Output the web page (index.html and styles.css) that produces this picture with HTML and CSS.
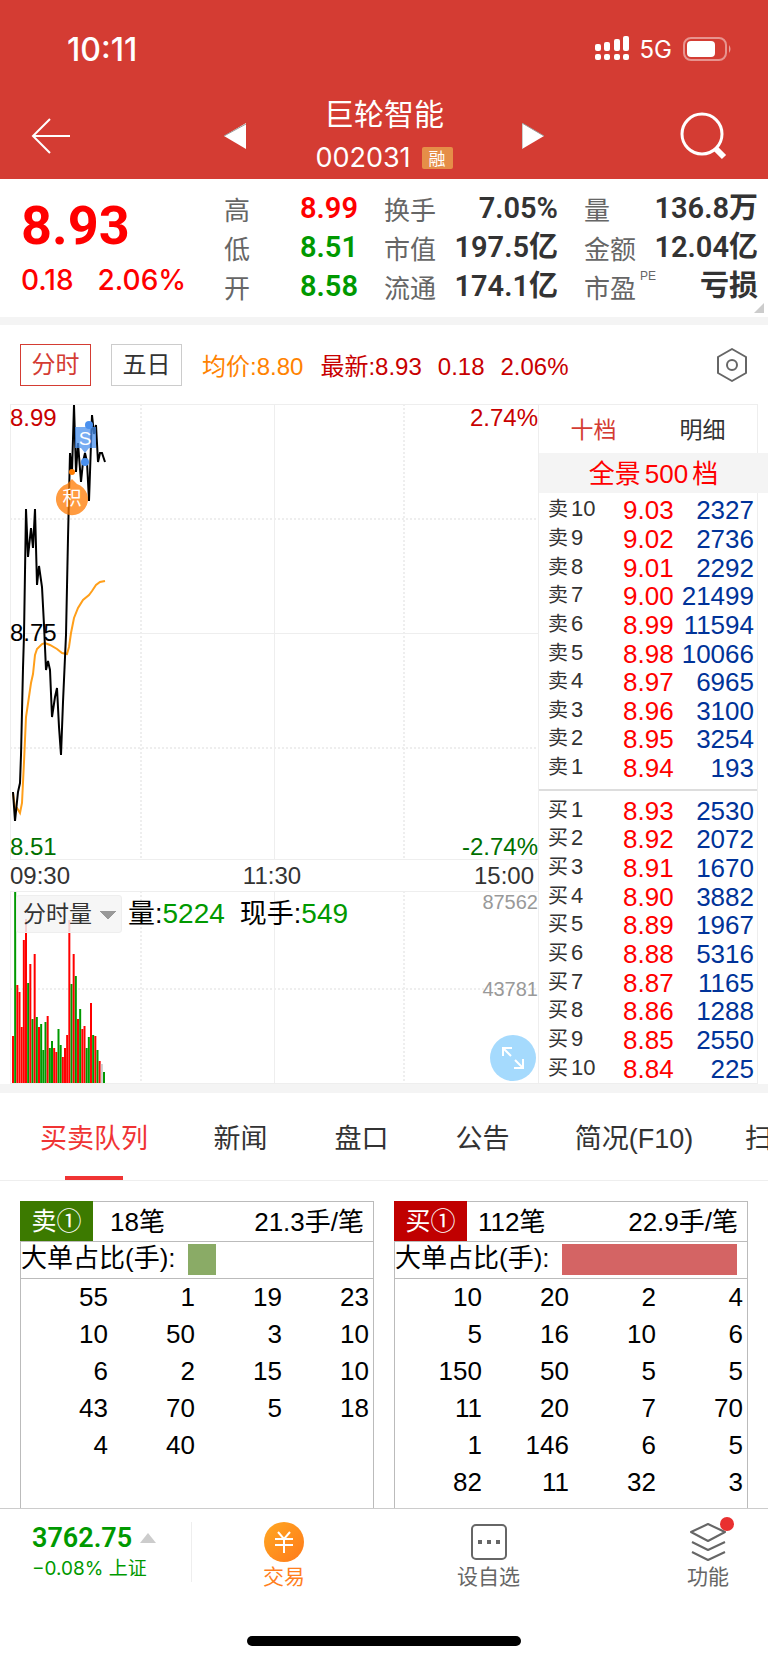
FILE: index.html
```html
<!DOCTYPE html>
<html lang="zh-CN">
<head>
  <meta charset="UTF-8" />
  <meta name="viewport" content="width=device-width, initial-scale=1.0"/>
  <title>巨轮智能 002031</title>
  <link rel="stylesheet" href="styles.css">
</head>
<body>

  <header class="header">
    <div class="status-bar">
      <span class="clock">10:11</span>
      <div class="status-icons">
        <svg width="34" height="26" viewBox="0 0 34 26" fill="#fff">
          <rect x="0" y="8" width="6" height="7" rx="2"/>
          <rect x="9" y="6" width="6" height="9" rx="2"/>
          <rect x="19" y="3" width="6" height="12" rx="2"/>
          <rect x="28" y="0" width="6" height="15" rx="2"/>
          <rect x="0" y="18" width="6" height="6" rx="2"/>
          <rect x="9" y="18" width="6" height="6" rx="2"/>
          <rect x="19" y="18" width="6" height="6" rx="2"/>
          <rect x="28" y="18" width="6" height="6" rx="2"/>
        </svg>
        <span class="network">5G</span>
        <svg width="49" height="24" viewBox="0 0 49 24">
          <rect x="1" y="1" width="42" height="22" rx="7" fill="none" stroke="#fff" stroke-opacity="0.45" stroke-width="2"/>
          <rect x="4" y="4" width="28" height="16" rx="4" fill="#fff"/>
          <path d="M46 8 Q49 12 46 16 Z" fill="#fff" fill-opacity="0.5"/>
        </svg>
      </div>
    </div>

    <nav class="stock-nav">
      <button class="back-btn" aria-label="返回">
        <svg width="40" height="38" viewBox="0 0 40 38" fill="none" stroke="#fff" stroke-width="2">
          <path d="M39 19 H2 M19 2 L2 19 L19 36"/>
        </svg>
      </button>
      <button class="arrow-btn" aria-label="上一只">
        <svg width="22" height="26" viewBox="0 0 22 26"><path d="M22 0 V26 L0 13 Z" fill="#fff"/><path d="M22 1 L0 13" stroke="#999" stroke-width="1"/></svg>
      </button>
      <div class="stock-title">
        <h1>巨轮智能</h1>
        <p>002031 <span class="tag">融</span></p>
      </div>
      <button class="arrow-btn" aria-label="下一只">
        <svg width="22" height="26" viewBox="0 0 22 26"><path d="M0 0 V26 L22 13 Z" fill="#fff"/><path d="M0 26 V0 L22 13" fill="none" stroke="#999" stroke-width="1"/></svg>
      </button>
      <button class="search-btn" aria-label="搜索">
        <svg width="48" height="48" viewBox="0 0 48 48" fill="none" stroke="#fff">
          <circle cx="22" cy="22" r="20" stroke-width="3"/>
          <path d="M36 37 L44 45" stroke-width="6"/>
        </svg>
      </button>
    </nav>
  </header>

  <section class="quote">
    <div class="price-box">
      <div class="price">8.93</div>
      <div class="change"><span>0.18</span><span>2.06%</span></div>
    </div>
    <dl class="stats stats-narrow">
      <dt>高</dt><dd class="up">8.99</dd>
      <dt>低</dt><dd class="down">8.51</dd>
      <dt>开</dt><dd class="down">8.58</dd>
    </dl>
    <dl class="stats">
      <dt>换手</dt><dd>7.05%</dd>
      <dt>市值</dt><dd>197.5亿</dd>
      <dt>流通</dt><dd>174.1亿</dd>
    </dl>
    <dl class="stats">
      <dt>量</dt><dd>136.8万</dd>
      <dt>金额</dt><dd>12.04亿</dd>
      <dt>市盈<span class="pe">PE</span></dt><dd>亏损</dd>
    </dl>
  </section>

  <section class="toolbar">
    <button class="period active">分时</button>
    <button class="period">五日</button>
    <span class="avg">均价:8.80</span>
    <span class="latest"><span>最新:8.93</span><span>0.18</span><span>2.06%</span></span>
    <button class="settings" aria-label="设置">
      <svg width="32" height="34" viewBox="0 0 32 34" fill="none" stroke="#666" stroke-width="2">
        <path d="M16 1 L30 9 V25 L16 33 L2 25 V9 Z" stroke-linejoin="round"/>
        <circle cx="16" cy="17" r="5"/>
      </svg>
    </button>
  </section>

  <section class="market">
    <div class="charts">
      <div class="chart">
        <svg viewBox="0 0 528 456">
          <g class="grid-lines">
            <path d="M0 .5 H528 M.5 0 V456 M0 229.5 H528 M264.5 0 V456 M0 455.5 H528"/>
            <path class="dotted" d="M0 115 H528 M0 344 H528 M131 0 V456 M394 0 V456"/>
          </g>
          <polyline class="line-avg" points="3,389 5,404 7,404 10,409 12,399 14,358 16,313 21,279 23,270 25,251 27,245 32,240 35,239 40,241 47,245 52,249 57,250 59,243 61,229 64,214 68,204 73,196 79,191 82,187 86,181 90,178 95,177"/>
          <polyline class="line-price" points="3,388 5,417 8,388 10,379 11,351 13,264 14,231 16,105 18,153 21,124 23,144 25,105 27,181 29,162 32,183 34,221 36,266 38,257 40,266 42,313 45,293 47,284 49,323 51,351 53,298 56,231 58,134 60,49 62,68 64,1 66,68 68,39 71,78 73,58 75,49 77,58 79,97 82,11 84,30 86,21 88,58 90,49 92,49 95,58"/>
          <g class="mark-sell">
            <circle cx="79" cy="21" r="4"/>
            <circle cx="75" cy="58" r="4"/>
            <path d="M65 23 H86 V44 H79 L75 49 L71 44 H65 Z"/>
            <text x="75" y="41">S</text>
          </g>
          <g class="mark-score">
            <circle cx="62" cy="68" r="3"/>
            <path d="M62 75 L67 80 A16 16 0 1 1 57 80 Z"/>
            <text x="62" y="101">积</text>
          </g>
        </svg>
        <span class="label top-left high">8.99</span>
        <span class="label top-right high">2.74%</span>
        <span class="label mid-left">8.75</span>
        <span class="label bottom-left low">8.51</span>
        <span class="label bottom-right low">-2.74%</span>
      </div>
      <div class="time-axis"><span>09:30</span><span>11:30</span><span>15:00</span></div>
      <div class="chart">
        <svg viewBox="0 0 528 193">
          <g class="grid-lines">
            <path d="M0 .5 H528 M.5 0 V193 M264.5 0 V193 M0 192.5 H528"/>
            <path class="dotted" d="M0 98 H528 M131 0 V193 M394 0 V193"/>
          </g>
          <g id="volumeBars"></g>
        </svg>
        <div class="volume-head">
          <select class="indicator" aria-label="指标"><option>分时量</option></select>
          <span>量:<b>5224</b></span>
          <span>现手:<b>549</b></span>
        </div>
        <span class="label scale-top">87562</span>
        <span class="label scale-mid">43781</span>
        <button class="expand-btn" aria-label="全屏">
          <svg width="46" height="46" viewBox="0 0 46 46" fill="none" stroke="#fff" stroke-width="2">
            <path d="M13 21 V13 H22 M13 13 L21 21 M33 24 V33 H24 M33 33 L25 25"/>
          </svg>
        </button>
      </div>
    </div>

    <aside class="order-book">
      <div class="book-tabs">
        <button class="active">十档</button>
        <button>明细</button>
      </div>
      <button class="full-view">全景<span>500</span>档</button>
      <table class="levels sell-levels" id="sellLevels"></table>
      <table class="levels buy-levels" id="buyLevels"></table>
    </aside>
  </section>

  <nav class="tabs">
    <button class="active">买卖队列</button>
    <button>新闻</button>
    <button>盘口</button>
    <button>公告</button>
    <button>简况(F10)</button>
    <button>扫雷</button>
  </nav>

  <section class="queues">
    <div class="queue sell">
      <div class="queue-head"><span class="side">卖①</span><span>18笔</span><span class="per">21.3手/笔</span></div>
      <div class="ratio">大单占比(手):<div class="track"><div class="bar" style="width:16%"></div></div></div>
      <table id="sellQueue"></table>
    </div>
    <div class="queue buy">
      <div class="queue-head"><span class="side">买①</span><span>112笔</span><span class="per">22.9手/笔</span></div>
      <div class="ratio">大单占比(手):<div class="track"><div class="bar" style="width:100%"></div></div></div>
      <table id="buyQueue"></table>
    </div>
  </section>

  <footer class="bottom-bar">
    <div class="index-box">
      <div class="index-value">3762.75 <i class="caret"></i></div>
      <div class="index-change">−0.08% 上证</div>
    </div>
    <a href="#" class="action trade">
      <svg width="40" height="40" viewBox="0 0 40 40">
        <defs>
          <linearGradient id="gold" x1="0" y1="0" x2="1" y2="1">
            <stop offset="0" stop-color="#ffa722"/><stop offset="1" stop-color="#ff7a1a"/>
          </linearGradient>
        </defs>
        <circle cx="20" cy="20" r="20" fill="url(#gold)"/>
        <path d="M14 10 L20 17 L26 10 M11 17 H29 M11 23 H29 M20 17 V31" fill="none" stroke="#fff" stroke-width="2"/>
      </svg>
      交易
    </a>
    <a href="#" class="action">
      <svg width="40" height="40" viewBox="0 0 40 40">
        <rect x="3" y="3" width="34" height="34" rx="4" fill="none" stroke="#666" stroke-width="2"/>
        <path d="M9 18 h4 v4 h-4 z M18 18 h4 v4 h-4 z M27 18 h4 v4 h-4 z" fill="#666"/>
      </svg>
      设自选
    </a>
    <a href="#" class="action more">
      <svg width="40" height="40" viewBox="0 0 40 40" fill="none" stroke="#666" stroke-width="2" stroke-linejoin="round">
        <path d="M20 2 L37 10 L20 19 L3 10 Z M4 20 L20 28 L37 20 M4 30 L20 38 L37 30"/>
      </svg>
      功能
      <span class="dot"></span>
    </a>
  </footer>
  <div class="home-indicator"></div>

  <script>
    const sells = [["9.03", 2327], ["9.02", 2736], ["9.01", 2292], ["9.00", 21499], ["8.99", 11594],
                   ["8.98", 10066], ["8.97", 6965], ["8.96", 3100], ["8.95", 3254], ["8.94", 193]];
    const buys = [["8.93", 2530], ["8.92", 2072], ["8.91", 1670], ["8.90", 3882], ["8.89", 1967],
                  ["8.88", 5316], ["8.87", 1165], ["8.86", 1288], ["8.85", 2550], ["8.84", 225]];

    function renderLevels(id, rows, name) {
      document.getElementById(id).innerHTML = rows.map(([price, vol], i) => {
        const level = name === "卖" ? 10 - i : i + 1;
        return `<tr><th>${name}<span>${level}</span></th><td class="lv-price">${price}</td><td class="lv-vol">${vol}</td></tr>`;
      }).join("");
    }

    function renderQueue(id, rows) {
      document.getElementById(id).innerHTML = rows.map(row =>
        `<tr>${row.map(n => `<td>${n}</td>`).join("")}</tr>`
      ).join("");
    }

    renderLevels("sellLevels", sells, "卖");
    renderLevels("buyLevels", buys, "买");
    renderQueue("sellQueue", [[55, 1, 19, 23], [10, 50, 3, 10], [6, 2, 15, 10], [43, 70, 5, 18], [4, 40, "", ""]]);
    renderQueue("buyQueue", [[10, 20, 2, 4], [5, 16, 10, 6], [150, 50, 5, 5], [11, 20, 7, 70], [1, 146, 6, 5], [82, 11, 32, 3]]);

    // one bar per minute, r = up, g = down, n = flat
    const heights = [47, 191, 98, 91, 56, 143, 164, 100, 119, 64, 129, 66, 56, 59, 33, 61, 67, 35, 42, 35, 31, 54,
                     38, 26, 35, 48, 163, 99, 129, 107, 64, 74, 54, 57, 35, 46, 80, 48, 47, 33, 22, 19, 11];
    const dirs = "rgrrrrrgrgrgrgggrggrrggrrrrgrgrgrrggrgrgrng";
    const colors = { r: "#f00", g: "#090", n: "#ccc" };
    const step = 91 / 42;
    document.getElementById("volumeBars").innerHTML = heights.map((h, i) =>
      `<rect x="${2 + i * step}" y="${192 - h}" width="2" height="${h}" fill="${colors[dirs[i]]}"/>`
    ).join("");
  </script>

</body>
</html>
```

FILE: styles.css
```css
* {
  box-sizing: border-box;
}

body {
  margin: 0;
  background-color: #fff;
  color: #333;
  font-family: "Liberation Sans", "Noto Sans CJK SC", sans-serif;
  font-size: 24px;
  overflow-x: hidden;
}

button, select {
  font: inherit;
  color: inherit;
  background: none;
  border: none;
  padding: 0;
  margin: 0;
  cursor: pointer;
}

h1, p, dl, dd {
  margin: 0;
}

svg {
  display: block;
}

/* header */
.header {
  background-color: #d43c33;
  color: #fff;
}

.status-bar {
  display: flex;
  justify-content: space-between;
  align-items: center;
  height: 92px;
  padding: 6px 36px 0 67px;
}

.clock {
  font-family: Inter, sans-serif;
  font-size: 32px;
  font-weight: 500;
}

.status-icons {
  display: flex;
  align-items: center;
  gap: 11px;
}

.network {
  font-family: Inter, sans-serif;
  font-size: 24px;
}

.stock-nav {
  display: grid;
  grid-template-columns: 1fr 22px 276px 22px 1fr;
  align-items: center;
  height: 87px;
  padding: 0 31px;
}

.back-btn { justify-self: start; }

.search-btn {
  justify-self: end;
  margin-right: 9px;
}

.stock-title {
  text-align: center;
}

.stock-title h1 {
  font-size: 30px;
  font-weight: normal;
  line-height: 44px;
}

.stock-title p {
  display: flex;
  justify-content: center;
  align-items: center;
  gap: 11px;
  height: 42px;
  font-family: Inter, sans-serif;
  font-size: 27px;
}

.tag {
  padding: 0 7px;
  font-family: "Noto Sans CJK SC", sans-serif;
  font-size: 17px;
  line-height: 22px;
  border-radius: 2px;
  background-color: #e58e48;
}

/* quote */
.quote {
  position: relative;
  display: flex;
  gap: 26px;
  height: 146px;
  padding: 10px 10px 0 21px;
  border-bottom: 8px solid #f4f4f4;
}

.quote::after {
  content: "";
  position: absolute;
  right: 4px;
  bottom: 4px;
  border-bottom: 10px solid #ccc;
  border-left: 10px solid transparent;
}

.price-box {
  flex: 1;
  color: #f00;
  white-space: nowrap;
}

.price {
  font-family: Roboto, sans-serif;
  font-size: 54px;
  font-weight: 700;
  line-height: 74px;
}

.change {
  display: flex;
  gap: 24px;
  font-family: Inter, sans-serif;
  font-size: 28px;
  font-weight: 500;
  line-height: 34px;
}

.stats {
  display: grid;
  grid-template-columns: auto 1fr;
  grid-auto-rows: 39px;
  width: 174px;
  line-height: 39px;
}

.stats-narrow {
  width: 134px;
}

.stats dt {
  position: relative;
  font-size: 26px;
  line-height: 44px;
  color: #666;
}

.stats dd {
  text-align: right;
  font-family: Roboto, "Noto Sans CJK SC", sans-serif;
  font-size: 29px;
  font-weight: 600;
}

.stats .up { color: #f00; }
.stats .down { color: #090; }

.pe {
  position: absolute;
  top: 2px;
  left: 100%;
  padding-left: 4px;
  font-size: 12px;
  line-height: 14px;
}

/* toolbar */
.toolbar {
  display: flex;
  align-items: center;
  height: 79px;
  padding: 0 20px;
  white-space: nowrap;
}

.period {
  width: 71px;
  height: 42px;
  margin-right: 20px;
  line-height: 38px;
  border: 1px solid #ccc;
}

.period.active {
  color: #d43c33;
  border-color: #d43c33;
}

.avg {
  margin-right: 17px;
  color: #ff8200;
}

.latest {
  display: flex;
  align-items: baseline;
  gap: 16px;
  color: #c80000;
}

.settings {
  margin-left: auto;
}

/* charts + order book */
.market {
  display: grid;
  grid-template-columns: 1fr 220px;
  padding: 0 10px;
  border-bottom: 9px solid #f4f4f4;
}

.chart {
  position: relative;
}

.chart svg {
  width: 100%;
}

.grid-lines path {
  fill: none;
  stroke: #eee;
}

.grid-lines .dotted {
  stroke-width: 2;
  stroke-dasharray: 2 2;
}

.line-avg, .line-price {
  fill: none;
  stroke: #000;
  stroke-width: 2;
}

.line-avg {
  stroke: #ff9f1a;
}

.mark-sell { fill: #4a90ee; }
.mark-sell path { fill-opacity: 0.75; }
.mark-score { fill: #ff7a00; }
.mark-score path { fill-opacity: 0.75; }

.mark-sell text, .mark-score text {
  fill: #fff;
  font-size: 19px;
  text-anchor: middle;
}

.label {
  position: absolute;
  line-height: 28px;
}

.top-left { top: 0; left: 0; }
.top-right { top: 0; right: 0; }
.mid-left { top: 50%; left: 0; margin-top: -13px; color: #000; }
.bottom-left { bottom: -1px; left: 0; }
.bottom-right { bottom: -1px; right: 0; }
.high { color: #c80000; }
.low { color: #007000; }

.time-axis {
  display: flex;
  justify-content: space-between;
  padding-right: 4px;
  line-height: 31px;
}

.volume-head {
  position: absolute;
  top: 4px;
  left: 6px;
  display: flex;
  align-items: center;
  gap: 15px;
  font-size: 27px;
  line-height: 36px;
  color: #000;
}

.volume-head span:first-of-type {
  margin-left: -9px;
}

.volume-head b {
  font-size: 28px;
  font-weight: normal;
  color: #090;
}

.indicator {
  appearance: none;
  width: 106px;
  height: 38px;
  padding-left: 6px;
  font-size: 23px;
  color: #333;
  border: 1px solid #eee;
  border-radius: 3px;
  background:
    linear-gradient(to bottom left, #999 50%, transparent 51%) 83px 15px / 8px 8px no-repeat,
    linear-gradient(to bottom right, #999 50%, transparent 51%) 91px 15px / 8px 8px no-repeat,
    rgba(244, 244, 244, 0.85);
}

.scale-top, .scale-mid {
  right: 0;
  font-size: 20px;
  color: #999;
}

.scale-top { top: -3px; }
.scale-mid { top: 50%; margin-top: -13px; }

.expand-btn {
  position: absolute;
  right: 2px;
  bottom: 3px;
  width: 46px;
  height: 46px;
  border-radius: 50%;
  background-color: #a5dafd;
}

.order-book {
  display: flex;
  flex-direction: column;
  border: 1px solid #eee;
}

.book-tabs {
  display: grid;
  grid-template-columns: 1fr 1fr;
  height: 48px;
  font-size: 23px;
}

.book-tabs button {
  padding-bottom: 2px;
}

.book-tabs .active {
  color: #d43c33;
}

.full-view {
  height: 40px;
  margin-right: -11px;
  padding-bottom: 3px;
  background-color: #f4f4f4;
  color: #f00;
  font-size: 26px;
}

.full-view span {
  margin: 0 4px;
}

.levels {
  flex: 1 1 auto;
  width: 100%;
  border-spacing: 0;
}

.sell-levels {
  padding: 3px 0 6px;
  border-bottom: 2px solid #ddd;
}

.buy-levels {
  padding-top: 6px;
}

.levels td, .levels th {
  padding: 0;
  height: 28px;
  line-height: 28px;
  font-size: 26px;
}

.levels th {
  width: 84px;
  padding: 0 0 2px 9px;
  font-size: 20px;
  line-height: 26px;
  font-weight: normal;
  text-align: left;
}

.levels th span {
  margin-left: 3px;
  font-size: 22px;
}

.lv-price {
  color: #f00;
}

.levels .lv-vol {
  padding-right: 3px;
  text-align: right;
  color: #003399;
}

/* tabs */
.tabs {
  display: grid;
  grid-template-columns: 172px 121px 121px 121px 182px 94px;
  height: 88px;
  padding-left: 8px;
  border-bottom: 1px solid #eee;
  font-size: 27px;
  overflow: hidden;
}

.tabs button {
  position: relative;
  white-space: nowrap;
}

.tabs .active {
  color: #f03434;
}

.tabs .active::after {
  content: "";
  position: absolute;
  bottom: 0;
  left: 50%;
  width: 58px;
  height: 4px;
  margin-left: -29px;
  background-color: #f03434;
}

/* queues */
.queues {
  display: grid;
  grid-template-columns: 1fr 1fr;
  gap: 20px;
  padding: 20px 20px 0;
  color: #000;
}

.queue {
  min-height: 307px;
  border: 1px solid #bbb;
  border-bottom: none;
}

.queue-head {
  display: flex;
  height: 40px;
  line-height: 40px;
  font-size: 26px;
  border-bottom: 1px solid #bbb;
}

.side {
  width: 73px;
  margin: -1px 17px 0 -1px;
  text-align: center;
  color: #fff;
  font-size: 25px;
  background-color: #3c7a00;
}

.buy .side {
  margin-right: 11px;
  background-color: #c00000;
}

.per {
  margin-left: auto;
  padding-right: 9px;
}

.ratio {
  display: flex;
  height: 37px;
  line-height: 33px;
  font-size: 26px;
  white-space: nowrap;
  border-bottom: 1px solid #bbb;
}

.track {
  flex: 1;
  margin: 2px 10px 3px 12px;
}

.bar {
  height: 31px;
  background-color: #8aab66;
}

.buy .bar {
  background-color: #d46464;
}

.queue table {
  width: 100%;
  padding-right: 4px;
  table-layout: fixed;
  border-spacing: 0;
}

.queue td {
  padding: 0;
  height: 37px;
  font-size: 26px;
  line-height: 36px;
  text-align: right;
  vertical-align: top;
}

/* bottom bar */
.bottom-bar {
  display: flex;
  height: 90px;
  padding: 13px 39px 0 32px;
  border-top: 1px solid #ccc;
}

.index-box {
  width: 160px;
  height: 60px;
  margin-right: 71px;
  color: #090;
  border-right: 1px solid #eee;
}

.index-value {
  display: flex;
  align-items: center;
  gap: 8px;
  font-family: Roboto, sans-serif;
  font-size: 27px;
  font-weight: 600;
  line-height: 32px;
}

.caret {
  border: 8px solid transparent;
  border-top: none;
  border-bottom: 10px solid #ccc;
}

.index-change {
  font-family: Inter, "Noto Sans CJK SC", sans-serif;
  font-size: 19px;
  line-height: 30px;
}

.action {
  position: relative;
  display: flex;
  flex-direction: column;
  align-items: center;
  font-size: 21px;
  line-height: 30px;
  color: #666;
  text-decoration: none;
}

.trade {
  margin-right: 152px;
  color: #ff7f1e;
}

.more {
  margin-left: auto;
}

.dot {
  position: absolute;
  top: -5px;
  right: -5px;
  width: 14px;
  height: 14px;
  border-radius: 50%;
  background-color: #e93030;
}

.home-indicator {
  width: 274px;
  height: 10px;
  margin: 38px auto 16px;
  border-radius: 5px;
  background-color: #000;
}
```
